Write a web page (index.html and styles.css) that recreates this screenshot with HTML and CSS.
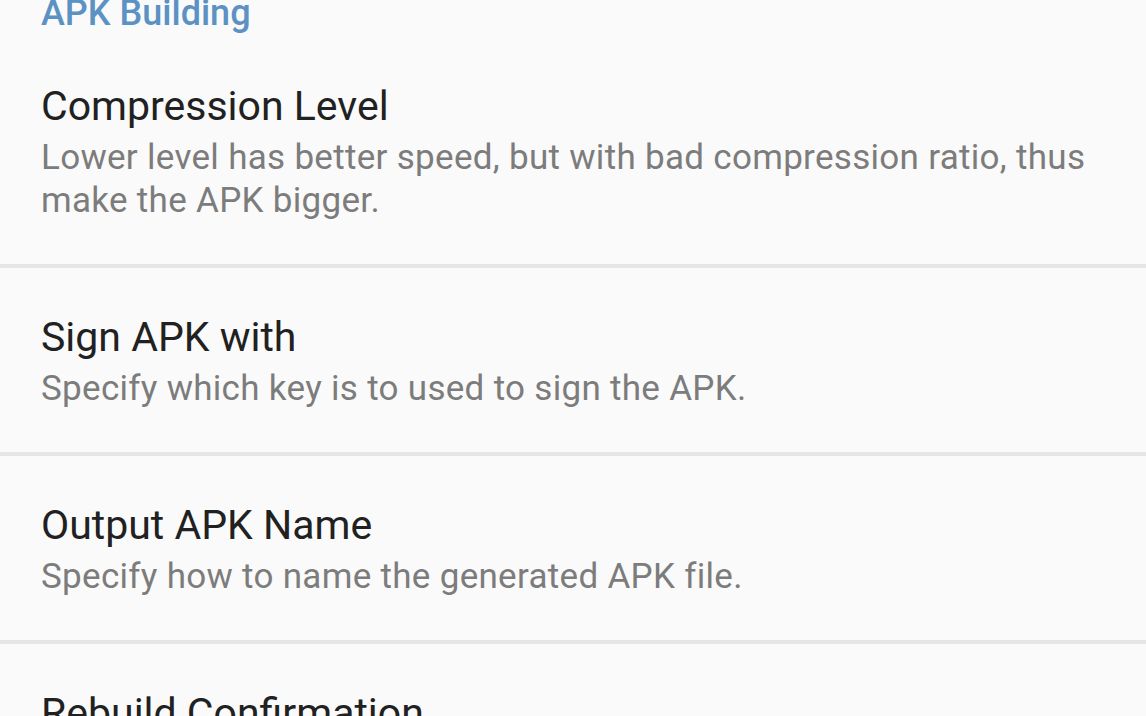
FILE: index.html
```html
<!DOCTYPE html>
<html lang="en">
<head>
  <meta charset="UTF-8">
  <meta name="viewport" content="width=device-width, initial-scale=1.0">
  <title>Settings</title>
  <link rel="stylesheet" href="styles.css">
</head>
<body>
  <div class="settings">
    <h2 class="category">APK Building</h2>

    <div class="pref">
      <div class="pref-title">Compression Level</div>
      <div class="pref-summary">Lower level has better speed, but with bad compression ratio, thus make the APK bigger.</div>
    </div>

    <div class="pref">
      <div class="pref-title">Sign APK with</div>
      <div class="pref-summary">Specify which key is to used to sign the APK.</div>
    </div>

    <div class="pref">
      <div class="pref-title">Output APK Name</div>
      <div class="pref-summary">Specify how to name the generated APK file.</div>
    </div>

    <div class="pref">
      <div class="pref-title">Rebuild Confirmation</div>
      <div class="pref-summary">Ask before rebuilding the APK.</div>
    </div>
  </div>
</body>
</html>
```

FILE: styles.css
```css
body {
  font-family: Roboto, 'Noto Sans', sans-serif;
  background-color: #fafafa;
  margin: 0;
  overflow: hidden;
}
.settings {
  width: 100%;
}
.category {
  margin: 0;
  padding: 0 41px 11px;
  font-size: 36px;
  font-weight: 500;
  line-height: 26px;
  color: #5b92c3;
}
.pref {
  padding: 45px 41px 42px 41px;
  border-bottom: 4px solid #e6e6e6;
}
.pref-title {
  font-size: 41px;
  line-height: 48px;
  color: #212121;
}
.pref-summary {
  margin-top: 6px;
  font-size: 35px;
  letter-spacing: 0.3px;
  line-height: 43px;
  color: #7c7c7c;
}
```
